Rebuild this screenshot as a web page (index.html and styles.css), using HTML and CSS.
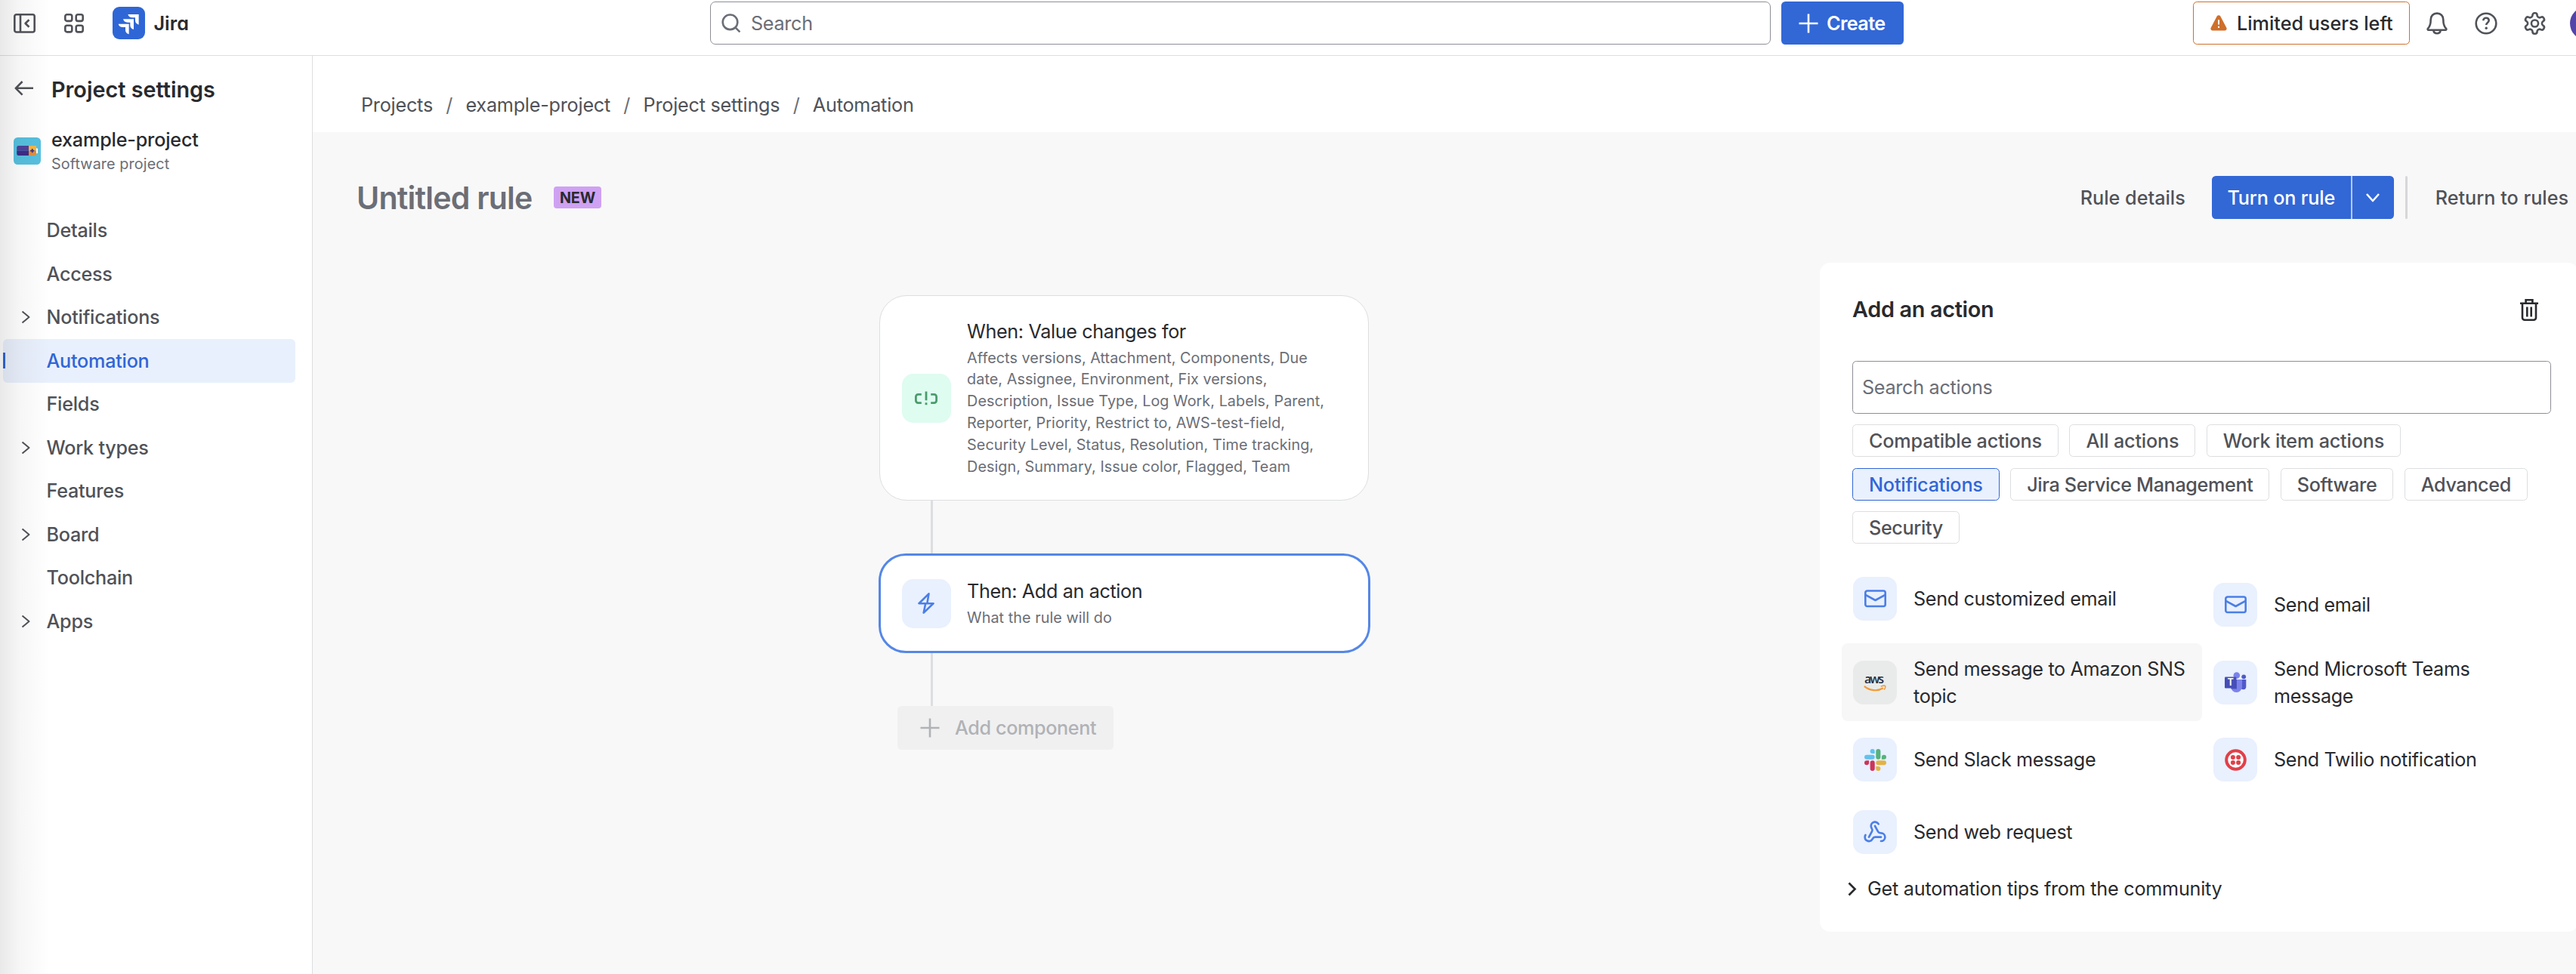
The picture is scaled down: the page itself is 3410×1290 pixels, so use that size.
FILE: index.html
```
<!DOCTYPE html>
<html lang="en">
<head>
<meta charset="utf-8">
<title>Automation - Jira</title>
<link rel="stylesheet" href="styles.css">
</head>
<body>
<div class="edge-shade"></div>
<header class="topbar">
  <div class="topbar-left">
    <svg class="icon collapse" width="29" height="26" viewBox="0 0 29 26"><rect x="1.3" y="1.3" width="26.4" height="23.2" rx="2.5"/><path d="M9 1.3v23.2M20.5 8.2L15.6 13l4.9 4.8"/></svg>
    <svg class="icon apps" width="26" height="26" viewBox="0 0 26 26"><rect x="1.3" y="1.3" width="9" height="8.6" rx="2.4"/><rect x="15.7" y="1.3" width="9" height="8.6" rx="2.4"/><rect x="1.3" y="15.8" width="9" height="8.6" rx="2.4"/><rect x="15.7" y="15.8" width="9" height="8.6" rx="2.4"/></svg>
    <svg class="jira-logo" width="43" height="43" viewBox="0 0 129 129"><rect width="129" height="129" rx="27" fill="#2f66d6"/><g fill="#fff"><path d="M61 30h43v41c-9-3-14-8-14-16V43H79C69 43 63 38 61 30z"/><path d="M42 49h42v41c-9-3-14-8-14-16V62H60C50 62 44 57 42 49z"/><path d="M23 68h42v41c-9-3-14-8-14-16V81H41C31 81 25 76 23 68z"/></g></svg>
    <span class="product">Jira</span>
  </div>
  <div class="global-search">
    <svg class="icon" width="26" height="26" viewBox="0 0 26 26"><circle cx="11.5" cy="11.3" r="9.8"/><path d="M18.4 18.4l6 6"/></svg>
    <span>Search</span>
  </div>
  <button class="btn create"><svg class="icon" width="26" height="26" viewBox="0 0 26 26"><path d="M13 .5v25M.5 13h25"/></svg>Create</button>
  <div class="topbar-right">
    <button class="users-left"><svg width="22" height="21" viewBox="0 0 22 21"><path d="M8.7 1.6a2.6 2.6 0 0 1 4.6 0l8 15.2a2.6 2.6 0 0 1-2.3 3.8H3a2.6 2.6 0 0 1-2.3-3.8z" fill="#cf6f2a"/><path d="M11 6.3v6.2M11 14.7v2.2" stroke="#fff" stroke-width="2"/></svg>Limited users left</button>
    <span class="icon-btn"><svg class="icon" width="28" height="30" viewBox="0 0 28 30"><path d="M14 1.6c-5 0-8.3 3.6-8.3 8.3 0 5.300-.9 9-3.600 11.700-.9 1-.4 2.100.7 2.100h22.400c1.100 0 1.600-1.100.7-2.100-2.700-2.700-3.600-6.400-3.600-11.700 0-4.700-3.300-8.300-8.300-8.300zM9.300 24c.3 2.700 2.200 4.300 4.700 4.300s4.400-1.600 4.700-4.300"/></svg></span>
    <span class="icon-btn"><svg class="icon" width="30" height="30" viewBox="0 0 30 30"><circle cx="15" cy="15" r="13.300"/><path d="M11.300 11.300c0-2.200 1.600-3.600 3.700-3.600s3.700 1.300 3.700 3.400c0 2.900-3.500 2.900-3.500 5.900"/><circle cx="15.200" cy="21.300" r="1.700" fill="#505258" stroke="none"/></svg></span>
    <span class="icon-btn"><svg class="icon gear" width="33" height="34" viewBox="0 0 24 24"><path d="M12.220 2h-.44a2 2 0 0 0-2 2v.18a2 2 0 0 1-1 1.730l-.43.250a2 2 0 0 1-2 0l-.15-.08a2 2 0 0 0-2.730.73l-.22.38a2 2 0 0 0 .73 2.730l.15.100a2 2 0 0 1 1 1.720v.510a2 2 0 0 1-1 1.740l-.15.090a2 2 0 0 0-.73 2.730l.22.380a2 2 0 0 0 2.730.73l.15-.08a2 2 0 0 1 2 0l.43.250a2 2 0 0 1 1 1.730V20a2 2 0 0 0 2 2h.44a2 2 0 0 0 2-2v-.18a2 2 0 0 1 1-1.730l.43-.25a2 2 0 0 1 2 0l.15.080a2 2 0 0 0 2.730-.73l.22-.39a2 2 0 0 0-.73-2.730l-.15-.08a2 2 0 0 1-1-1.740v-.5a2 2 0 0 1 1-1.740l.15-.09a2 2 0 0 0 .73-2.730l-.22-.38a2 2 0 0 0-2.730-.73l-.15.080a2 2 0 0 1-2 0l-.43-.25a2 2 0 0 1-1-1.730V4a2 2 0 0 0-2-2z"/><circle cx="12" cy="12" r="3.300"/></svg></span>
    <span class="avatar"></span>
  </div>
</header>

<div class="body">
  <aside class="sidebar">
    <div class="side-title">
      <svg class="icon" width="26" height="20" viewBox="0 0 26 20"><path d="M25 9.800H1.800M10.600 1L1.800 9.800l8.800 8.800"/></svg>
      <h2>Project settings</h2>
    </div>
    <div class="project">
      <svg width="36" height="36" viewBox="0 0 36 36"><rect width="36" height="36" rx="5.400" fill="#57c0df"/><path d="M6.500 11H20v6.500H4.200V13.300a2.300 2.300 0 0 1 2.300-2.300z" fill="#4f409c"/><path d="M4.200 17.500H20V24H6.500a2.300 2.300 0 0 1-2.300-2.300z" fill="#3c2d88"/><path d="M20 11h10v6.500H20z" fill="#f8b73e"/><path d="M20 17.500h10V24H20z" fill="#e2903a"/><path d="M30 14.200h.8a1.200 1.200 0 0 1 1.200 1.200v4.600a1.200 1.200 0 0 1-1.200 1.200H30z" fill="#fff"/><path d="M24.700 15v5.200M22.100 17.600h5.200" stroke="#3c2d88" stroke-width="1.600"/></svg>
      <div><div class="project-name">example-project</div><div class="project-type">Software project</div></div>
    </div>
    <nav>
      <a class="nav-item">Details</a>
      <a class="nav-item">Access</a>
      <a class="nav-item"><svg class="icon chev" width="12" height="18" viewBox="0 0 12 18"><path d="M1.500 1.500L10.500 9l-9 7.500"/></svg>Notifications</a>
      <a class="nav-item selected">Automation</a>
      <a class="nav-item">Fields</a>
      <a class="nav-item"><svg class="icon chev" width="12" height="18" viewBox="0 0 12 18"><path d="M1.500 1.500L10.500 9l-9 7.500"/></svg>Work types</a>
      <a class="nav-item">Features</a>
      <a class="nav-item"><svg class="icon chev" width="12" height="18" viewBox="0 0 12 18"><path d="M1.500 1.500L10.500 9l-9 7.500"/></svg>Board</a>
      <a class="nav-item">Toolchain</a>
      <a class="nav-item"><svg class="icon chev" width="12" height="18" viewBox="0 0 12 18"><path d="M1.500 1.500L10.500 9l-9 7.500"/></svg>Apps</a>
    </nav>
  </aside>

  <main class="main">
    <div class="breadcrumbs"><a>Projects</a><i>/</i><a>example-project</a><i>/</i><a>Project settings</a><i>/</i><a>Automation</a></div>
    <div class="workspace">
      <div class="rule-header">
        <h1>Untitled rule</h1>
        <span class="badge">NEW</span>
        <div class="rule-actions">
          <span class="link">Rule details</span>
          <div class="split"><button class="btn turn-on">Turn on rule</button><button class="btn more"><svg class="icon" width="20" height="14" viewBox="0 0 20 14"><path d="M2 2l8 9 8-9"/></svg></button></div>
          <span class="divider"></span>
          <span class="link">Return to rules</span>
        </div>
      </div>
      <div class="columns">
        <div class="flow">
          <div class="card">
            <span class="tile green"><svg width="30" height="19" viewBox="0 0 30 19" fill="none" stroke="#4a9c6c" stroke-width="2.800"><path d="M8.800 4.300H4.400a3 3 0 0 0-3 3v5.300a3 3 0 0 0 3 3h4.400M21.200 4.300h4.400a3 3 0 0 1 3 3v5.300a3 3 0 0 1-3 3h-4.400M15 .5v11.700M15 15.300v3"/></svg></span>
            <div class="card-text">
              <div class="card-title">When: Value changes for</div>
              <div class="card-desc">Affects versions, Attachment, Components, Due date, Assignee, Environment, Fix versions, Description, Issue Type, Log Work, Labels, Parent, Reporter, Priority, Restrict to, AWS-test-field, Security Level, Status, Resolution, Time tracking, Design, Summary, Issue color, Flagged, Team</div>
            </div>
          </div>
          <div class="connector"></div>
          <div class="card active">
            <span class="tile blue"><svg class="blue-icon" width="22" height="28" viewBox="0 0 22 28"><path d="M14.500 1.400L1.500 14.200h8.700L7.700 26.600l12.800-12.400h-8.200z"/></svg></span>
            <div class="card-text">
              <div class="card-title">Then: Add an action</div>
              <div class="card-desc">What the rule will do</div>
            </div>
          </div>
          <div class="connector"></div>
          <button class="add-component"><svg class="icon" width="26" height="26" viewBox="0 0 26 26"><path d="M13 .5v25M.5 13h25"/></svg>Add component</button>
        </div>

        <section class="panel">
          <div class="panel-head">
            <h3>Add an action</h3>
            <svg width="24" height="29" viewBox="0 0 24 29" fill="none" stroke="#292a2e" stroke-width="2.600"><path d="M0 5.800h24M7.600 5.500V1.300h8.800v4.200M3 6v18.700a3 3 0 0 0 3 3h12a3 3 0 0 0 3-3V6M9.300 10.500v13M14.700 10.500v13"/></svg>
          </div>
          <div class="action-search">Search actions</div>
          <div class="chips">
            <span>Compatible actions</span><span>All actions</span><span>Work item actions</span>
            <span class="on">Notifications</span><span>Jira Service Management</span><span>Software</span><span>Advanced</span>
            <span>Security</span>
          </div>
          <div class="actions">
            <div class="action first"><span class="tile sm blue"><svg class="blue-icon" width="29" height="24" viewBox="0 0 29 24"><rect x="1.300" y="1.500" width="26.400" height="20.500" rx="2.500"/><path d="M1.500 6.800L14.500 14l13-7.200"/></svg></span>Send customized email</div>
            <div class="action"><span class="tile sm blue"><svg class="blue-icon" width="29" height="24" viewBox="0 0 29 24"><rect x="1.300" y="1.500" width="26.400" height="20.500" rx="2.500"/><path d="M1.500 6.800L14.500 14l13-7.200"/></svg></span>Send email</div>
            <div class="action hover"><span class="tile sm grey"><svg class="aws-logo" width="32" height="30" viewBox="-1 -5 32 30"><text class="aws" x="14" y="10.500" text-anchor="middle" textLength="26">aws</text><path d="M.8 14.800c8 6.500 18 7 25 2.500" fill="none" stroke="#f29b38" stroke-width="2.200"/><path d="M22.800 15.200c2.300-1 5.400-1.300 5.900-.6s-.3 3.500-1.700 5" fill="none" stroke="#f29b38" stroke-width="1.500"/></svg></span>Send message to Amazon SNS topic</div>
            <div class="action"><span class="tile sm blue"><svg width="29" height="29" viewBox="0 0 29 29"><circle cx="25.200" cy="7.300" r="2.900" fill="#5059c9"/><path d="M21 11h7.300v9.500a3.600 3.600 0 0 1-7.300 0z" fill="#5059c9"/><circle cx="15.800" cy="5.500" r="4.300" fill="#7b83eb"/><path d="M8 11h15v9.500a7.500 7.500 0 0 1-15 0z" fill="#7b83eb"/><path d="M8 11h8v12.500H8.800A8 8 0 0 1 8 20z" fill="#5359bd"/><rect y="7.500" width="15.400" height="15" rx="1.300" fill="#464eb8"/><text class="teams" x="7.700" y="19.300" text-anchor="middle">T</text></svg></span>Send Microsoft Teams message</div>
            <div class="action"><span class="tile sm blue"><svg width="29" height="29" viewBox="0 0 24 24"><path d="M8.834 5.042a2.528 2.528 0 0 1-2.521-2.520A2.528 2.528 0 0 1 8.834 0a2.528 2.528 0 0 1 2.521 2.522v2.520H8.834zM8.834 6.313a2.528 2.528 0 0 1 2.521 2.521 2.528 2.528 0 0 1-2.521 2.521H2.522A2.528 2.528 0 0 1 0 8.834a2.528 2.528 0 0 1 2.522-2.521h6.312z" fill="#62c2ec"/><path d="M8.834 5.042a2.528 2.528 0 0 1-2.521-2.520A2.528 2.528 0 0 1 8.834 0a2.528 2.528 0 0 1 2.521 2.522v2.520H8.834zM8.834 6.313a2.528 2.528 0 0 1 2.521 2.521 2.528 2.528 0 0 1-2.521 2.521H2.522A2.528 2.528 0 0 1 0 8.834a2.528 2.528 0 0 1 2.522-2.521h6.312z" fill="#56b27c" transform="rotate(90 12 12)"/><path d="M8.834 5.042a2.528 2.528 0 0 1-2.521-2.520A2.528 2.528 0 0 1 8.834 0a2.528 2.528 0 0 1 2.521 2.522v2.520H8.834zM8.834 6.313a2.528 2.528 0 0 1 2.521 2.521 2.528 2.528 0 0 1-2.521 2.521H2.522A2.528 2.528 0 0 1 0 8.834a2.528 2.528 0 0 1 2.522-2.521h6.312z" fill="#e2b345" transform="rotate(180 12 12)"/><path d="M8.834 5.042a2.528 2.528 0 0 1-2.521-2.520A2.528 2.528 0 0 1 8.834 0a2.528 2.528 0 0 1 2.521 2.522v2.520H8.834zM8.834 6.313a2.528 2.528 0 0 1 2.521 2.521 2.528 2.528 0 0 1-2.521 2.521H2.522A2.528 2.528 0 0 1 0 8.834a2.528 2.528 0 0 1 2.522-2.521h6.312z" fill="#cc355c" transform="rotate(270 12 12)"/></svg></span>Send Slack message</div>
            <div class="action"><span class="tile sm blue"><svg width="29" height="29" viewBox="0 0 29 29" fill="#e0404a"><circle cx="14.500" cy="14.500" r="12.300" fill="#fff" stroke="#e0404a" stroke-width="4"/><circle cx="10.900" cy="10.900" r="3"/><circle cx="18.100" cy="10.900" r="3"/><circle cx="10.900" cy="18.100" r="3"/><circle cx="18.100" cy="18.100" r="3"/></svg></span>Send Twilio notification</div>
            <div class="action last"><span class="tile sm blue"><svg class="blue-icon webhook" width="32" height="32" viewBox="0 0 24 24"><path d="M18 16.980h-5.990c-1.100 0-1.950.94-2.480 1.900A4 4 0 0 1 2 17c.01-.7.200-1.400.570-2"/><path d="M6 17l3.130-5.780c.53-.97.100-2.180-.5-3.100a4 4 0 1 1 6.890-4.060"/><path d="M12 6l3.130 5.730C15.660 12.700 16.900 13 18 13a4 4 0 0 1 0 8"/></svg></span>Send web request</div>
          </div>
          <div class="tips"><svg width="12" height="19" viewBox="0 0 12 19" fill="none" stroke="#292a2e" stroke-width="2.700"><path d="M1.500 1.500L9.500 9.500l-8 8"/></svg>Get automation tips from the community</div>
        </section>
      </div>
    </div>
  </main>
</div>
</body>
</html>
```
FILE: styles.css
```
* { box-sizing: border-box; }
html, body { margin: 0; height: 100%; overflow: hidden; }
body {
  display: flex; flex-direction: column;
  background: #fff; color: #292a2e;
  font: 400 25.2px/36px "Inter", "Liberation Sans", sans-serif;
  letter-spacing: -0.3px;
}
h1, h2, h3 { margin: 0; }
svg { display: block; flex: none; }
button { font: inherit; letter-spacing: inherit; border: 0; padding: 0; margin: 0; display: flex; align-items: center; }
.icon { fill: none; stroke: #505258; stroke-width: 2.6; stroke-linejoin: round; }
.edge-shade {
  position: absolute; left: 0; top: 0; bottom: 0; width: 66px; z-index: 5;
  background: linear-gradient(90deg, rgba(0,0,0,.085), rgba(0,0,0,.035) 40%, rgba(0,0,0,0));
  pointer-events: none;
}

/* Top bar */
.topbar {
  flex: none; height: 74px; padding: 2px 0 14px; border-bottom: 1px solid #dddee1;
  display: flex; align-items: center;
}
.topbar > * { flex: none; }
.topbar-left { width: 940px; padding-left: 18px; display: flex; align-items: center; }
.apps { margin-left: 37.5px; }
.jira-logo { margin-left: 38px; }
.product { margin-left: 12px; font-weight: 600; font-feature-settings: "cv11"; letter-spacing: 0; }
.global-search {
  width: 1404px; height: 57px; border: 1px solid #8c8f97; border-radius: 7px;
  display: flex; align-items: center; gap: 13px; padding-left: 14px; color: #6b6e76;
}
.global-search .icon { stroke: #6b6e76; }
.btn { height: 57px; background: #3267d6; color: #fff; font-weight: 500; }
.btn .icon { stroke: #fff; }
.create { width: 162px; margin-left: 14px; border-radius: 5.4px; padding-left: 23px; gap: 11px; font-weight: 600; letter-spacing: -0.6px; }
.topbar-right { margin-left: 383px; display: flex; align-items: center; }
.users-left {
  width: 287px; height: 57px; border: 1px solid #cf6f2a; border-radius: 5.4px; background: #fff;
  color: #292a2e; font-weight: 500; padding-left: 22px; gap: 13px; letter-spacing: 0; margin-right: 4px;
  white-space: nowrap;
}
.icon-btn { width: 64.6px; display: flex; justify-content: center; }
.gear { stroke-width: 1.9; }
.avatar { width: 44px; height: 44px; border-radius: 50%; background: #5244a8; margin-left: 14px; flex: none; }

.body { flex: 1; display: flex; min-height: 0; }

/* Sidebar */
.sidebar { width: 414px; flex: none; border-right: 1px solid #dddee1; padding-top: 25px; letter-spacing: -0.15px; }
.side-title { height: 36px; display: flex; align-items: center; padding-left: 19px; gap: 22px; }
.side-title h2 { font-size: 28.8px; font-weight: 600; letter-spacing: 0; padding: 3px 0 0 1px; }
.project { margin-top: 33px; padding-left: 18px; height: 64px; display: flex; align-items: center; gap: 14px; }
.project-name { font-weight: 500; line-height: 34px; letter-spacing: -0.2px; }
.project-type { font-size: 19.8px; line-height: 29px; color: #6b6e76; letter-spacing: 0.1px; padding-top: 1px; }
nav { margin: 44.500px 22px 0 4px; letter-spacing: -0.250px; }
.nav-item {
  height: 57.500px; display: flex; align-items: center; position: relative;
  padding-left: 57.500px; color: #505258; font-weight: 500;
}
.chev { margin-left: -34px; margin-right: 22px; stroke-width: 2; }
.nav-item.selected { background: #e9f0fd; color: #2f66d6; border-radius: 6px; }
.selected::before { content: ""; position: absolute; left: 0; top: 18px; width: 3px; height: 21px; background: #2f66d6; }

/* Main */
.main { flex: 1; min-width: 0; display: flex; flex-direction: column; }
.breadcrumbs {
  height: 101px; flex: none; padding: 29px 0 0 64px; display: flex; align-items: flex-start;
  line-height: 72px; color: #505258; letter-spacing: -0.22px;
}
.breadcrumbs i { font-style: normal; color: #6b6e76; width: 43.500px; text-align: center; }
.workspace { flex: 1; background: #f8f8f8; padding-top: 58px; min-height: 0; }
.rule-header { height: 57px; display: flex; align-items: center; padding-left: 58px; }
.rule-header h1 { font-size: 41px; font-weight: 600; letter-spacing: -0.75px; color: #6b6e76; width: 261px; white-space: nowrap; }
.badge {
  width: 63px; height: 29px; border-radius: 4px; background: #cfa1f3; color: #292a2e;
  font-size: 19.800px; font-weight: 700; line-height: 30px; text-align: center; letter-spacing: -0.2px;
}
.rule-actions { margin-left: auto; display: flex; align-items: center; padding-right: 10px; color: #505258; font-weight: 500; letter-spacing: 0; }
.split { display: flex; gap: 2px; margin-left: 35px; background: #b5c9f2; border-radius: 5.400px; }
.turn-on { width: 184px; justify-content: center; border-radius: 5.400px 0 0 5.400px; letter-spacing: -0.180px; }
.more { width: 55px; justify-content: center; border-radius: 0 5.400px 5.400px 0; }
.divider { width: 3px; height: 57px; background: #d6d7da; border-radius: 2px; margin: 0 37px 0 15px; }

.columns { display: flex; margin-top: 58px; justify-content: space-between; align-items: flex-start; }
.flow { margin: 43px 0 0 750px; width: 650px; }
.card {
  width: 647.500px; background: #fff; border: 1px solid #dddee1; border-radius: 36px;
  display: flex; align-items: center; padding: 29px 28.500px; gap: 21.600px; min-height: 132px;
}
.card:not(.active) { height: 272px; }
.card.active { width: 651px; margin-left: -1.500px; border: 3px solid #5587e6; padding: 0 28px; }
.card-text { width: 485px; flex: none; }
.card-title { white-space: nowrap; letter-spacing: -0.380px; line-height: 34px; margin-bottom: 4px; }
.card-desc { font-size: 19.800px; line-height: 28.800px; color: #6b6e76; letter-spacing: 0.050px; }
.tile { width: 65px; height: 65px; border-radius: 15px; flex: none; display: flex; align-items: center; justify-content: center; }
.tile.sm { width: 58px; height: 58px; border-radius: 14px; }
.blue { background: #e9f0fe; }
.green { background: #defcf0; }
.grey { background: #e9ebea; }
.blue-icon { fill: none; stroke: #4a7fe6; stroke-width: 2.600; stroke-linejoin: round; }
.webhook { stroke-width: 2; stroke-linecap: round; }
.connector { width: 3.500px; height: 70px; background: #dddee1; margin-left: 67.500px; }
.add-component {
  width: 286px; height: 58px; margin-left: 24px; background: #f0f0f0; border-radius: 5.400px;
  color: #b0b2b7; font-weight: 500; padding-left: 30px; gap: 20px; letter-spacing: -0.380px; white-space: nowrap;
}
.add-component .icon { stroke: #b0b2b7; }

/* Action panel */
.panel { width: 1004px; margin-right: -3px; height: 886px; flex: none; background: #fff; border-radius: 14px; padding: 44px 36px 0 43px; }
.panel-head { height: 36px; display: flex; align-items: center; justify-content: space-between; padding-right: 17px; }
.panel-head h3 { font-size: 28.800px; font-weight: 600; letter-spacing: -0.300px; }
.action-search { margin-top: 50px; height: 70px; border: 1px solid #8c8f97; border-radius: 5.400px; padding-left: 12px; line-height: 69px; color: #6b6e76; }
.chips { margin-top: 14px; display: flex; flex-wrap: wrap; gap: 14.400px; }
.chips span {
  height: 43.200px; border: 1px solid #dddee1; border-radius: 5.400px; padding: 0 21px; line-height: 42px;
  color: #505258; font-weight: 500; letter-spacing: -0.180px; white-space: nowrap;
}
.chips span:nth-child(n+5) { letter-spacing: -0.360px; }
.chips .on { background: #e9f0fe; border-color: #2f66d6; color: #2f66d6; }
.actions { margin: 29.500px -10px 0 -14px; display: grid; grid-template-columns: 477px 477px; grid-template-rows: 102.500px 102.500px 102.500px 90px; }
.action { display: flex; align-items: center; padding: 0 44px 0 15px; gap: 22px; letter-spacing: -0.350px; border-radius: 8px; }
.action.first { height: 87px; }
.action.hover { background: #f7f7f7; padding-right: 22px; }
.aws { font: 600 16px "Open Sans", sans-serif; fill: #252f3e; letter-spacing: 0; }
.aws-logo { overflow: visible; }
.teams { font: 700 12.500px "Inter", sans-serif; fill: #fff; letter-spacing: 0; }
.tips { margin: 12px 0 0 -6px; height: 36px; display: flex; align-items: center; gap: 14px; letter-spacing: -0.240px; }
```
